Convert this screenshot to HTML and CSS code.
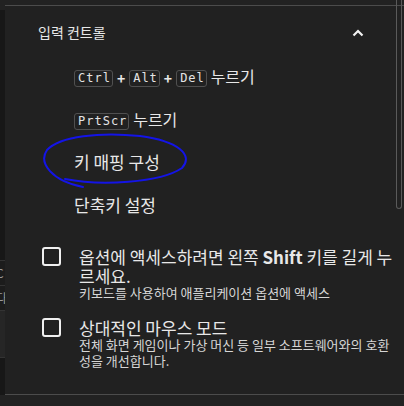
FILE: index.html
```html
<!DOCTYPE html>
<html>
<head>
    <title>입력 컨트롤</title>
    <link rel="stylesheet" href="styles.css">
</head>
<body>

<div class="frame">
    <!-- edge of the window behind -->
    <div class="side">
        <div class="side-gap"></div>
        <div class="side-line"></div>
        <div class="side-cell">C</div>
        <div class="side-line"></div>
        <div class="side-cell">다</div>
        <div class="side-line"></div>
        <div class="side-block"></div>
        <div class="side-line"></div>
    </div>

    <div class="panel">
        <div class="section-head">
            <span>입력 컨트롤</span>
            <svg class="chevron" width="12" height="8" viewBox="0 0 12 8">
                <path d="M1.5 6.5 L6 2 L10.5 6.5" fill="none" stroke="#f2f2f2" stroke-width="2.2"/>
            </svg>
        </div>

        <ul class="menu">
            <li><kbd>Ctrl</kbd><b class="plus">+</b><kbd>Alt</kbd><b class="plus">+</b><kbd>Del</kbd> <span class="press">누르기</span></li>
            <li><kbd>PrtScr</kbd> <span class="press">누르기</span></li>
            <li class="marked">키 매핑 구성<svg class="scribble" width="150" height="60" viewBox="40 132 150 60">
                    <path d="M65 179 C100 186 160 183 182 168 C194 155 178 141 140 136 C100 132 60 136 47 150 C38 163 52 181 83 187"
                          fill="none" stroke="#1414e6" stroke-width="2" stroke-linecap="round"/>
                </svg></li>
            <li>단축키 설정</li>
        </ul>

        <div class="option first">
            <span class="box"></span>
            <div class="option-text">
                <div class="title">옵션에 액세스하려면 왼쪽 <b>Shift</b> 키를 길게 누르세요.</div>
                <div class="desc">키보드를 사용하여 애플리케이션 옵션에 액세스</div>
            </div>
        </div>

        <div class="option">
            <span class="box"></span>
            <div class="option-text">
                <div class="title">상대적인 마우스 모드</div>
                <div class="desc">전체 화면 게임이나 가상 머신 등 일부 소프트웨어와의 호환성을 개선합니다.</div>
            </div>
        </div>

        <div class="scrollbar"></div>
    </div>
</div>

</body>
</html>
```

FILE: styles.css
```css
body {
    margin: 0;
    background-color: #222222;
    font-family: "Noto Sans CJK KR", "Noto Sans", sans-serif;
    color: #e8e8e8;
}

.frame {
    display: flex;
    height: 395px;
}

.side {
    width: 5px;
    margin-top: 10px;
    background-color: #171717;
    display: flex;
    flex-direction: column;
    overflow: hidden;
}

.side-gap {
    height: 250px;
}

.side-line {
    height: 1px;
    background-color: #333;
}

.side-cell {
    height: 24px;
    font-size: 12px;
    line-height: 24px;
    color: #999;
    text-indent: -4px;
    background-color: #1c1c1c;
}

.side-block {
    height: 46px;
    background-color: #262626;
}

.panel {
    flex: 1;
    position: relative;
    margin-top: 5px;
    border-top: 1px solid #4c4c4c;
    border-bottom: 1px solid #4c4c4c;
    background-color: #212121;
    padding-left: 33px;
    padding-right: 9px;
    box-sizing: border-box;
}

.section-head {
    display: flex;
    align-items: center;
    justify-content: space-between;
    padding: 16px 31px 12px 0;
    font-size: 14px;
    line-height: 20px;
}

.chevron {
    margin-top: 2px;
}

.menu {
    list-style: none;
    margin: 0;
    padding: 0 0 0 36px;
}

.menu li {
    height: 43px;
    line-height: 43px;
    font-size: 17px;
    white-space: nowrap;
}

.menu li.marked {
    position: relative;
}

.press {
    font-size: 16px;
}

kbd {
    display: inline-block;
    vertical-align: middle;
    font-family: "DejaVu Sans Mono", monospace;
    font-size: 12px;
    letter-spacing: 1px;
    line-height: 15px;
    padding: 0 1px 0 3px;
    border: 1px solid #505050;
    border-radius: 3px;
    color: #e4e4e4;
}

.plus {
    font-size: 14px;
    padding: 0 4px;
    vertical-align: middle;
}

.scribble {
    position: absolute;
    left: -34px;
    top: -8px;
}

.option {
    display: flex;
    gap: 18px;
    margin-top: 17px;
}

.option.first {
    margin-top: 21px;
}

.box {
    flex: none;
    width: 15px;
    height: 15px;
    margin-left: 4px;
    border: 2px solid #f0f0f0;
    border-radius: 3px;
}

.option-text {
    flex: 1;
}

.title {
    font-size: 17px;
    line-height: 19px;
}

.desc {
    font-size: 13px;
    line-height: 16px;
    color: #d6d6d6;
}

.scrollbar {
    position: absolute;
    top: -6px;
    right: 2px;
    width: 4px;
    height: 208px;
    border: 1px solid #5a5a5a;
    border-top: none;
    border-radius: 0 0 4px 4px;
}
```
